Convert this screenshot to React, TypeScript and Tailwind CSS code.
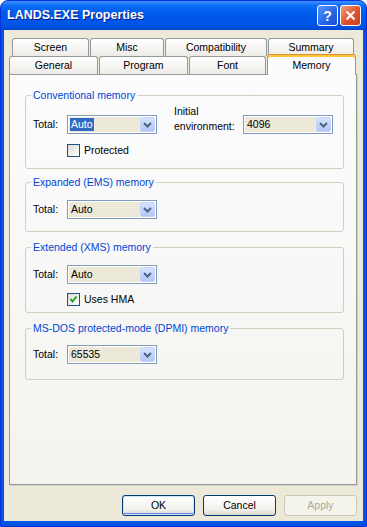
import React from 'react';

const topTabs = [
  { label: 'Screen', w: 'w-[77px]' },
  { label: 'Misc', w: 'w-[74px]' },
  { label: 'Compatibility', w: 'w-[102px]' },
  { label: 'Summary', w: 'w-[86px]' },
];

const bottomTabs = [
  { label: 'General', w: 'w-[89px]' },
  { label: 'Program', w: 'w-[89px]' },
  { label: 'Font', w: 'w-[77px]' },
];

function Chevron() {
  return (
    <svg width="9" height="6" viewBox="0 0 9 6">
      <path d="M1 1 L4.5 4.5 L8 1" fill="none" stroke="#4D6185" strokeWidth="2" />
    </svg>
  );
}

function Combo({ value, selected }: { value: string; selected?: boolean }) {
  return (
    <div className="flex h-[19px] w-[90px] shrink-0 border border-[#7F9DB9] bg-white p-px">
      <div className="flex flex-1 items-center bg-[#ECE9D8] pl-px">
        <span className={selected ? 'bg-[#316AC5] px-px leading-[13px] text-white' : 'px-px leading-[13px]'}>{value}</span>
      </div>
      <div className="flex w-[15px] items-center justify-center rounded-[2px] border border-[#C3D3FD] bg-[linear-gradient(180deg,#D7E3FD,#B2C7F5)]">
        <Chevron />
      </div>
    </div>
  );
}

function Check({ label, checked }: { label: string; checked?: boolean }) {
  return (
    <div className="flex h-[13px] items-center gap-[4px] pl-[34px]">
      <div className="flex h-[13px] w-[13px] items-center justify-center border border-[#1C5180] bg-[linear-gradient(135deg,#DCDCD7,#FFFFFF)]">
        {checked && (
          <svg width="9" height="9" viewBox="0 0 9 9">
            <path d="M1.5 4 L3.5 6.5 L7.5 1.5" fill="none" stroke="#21A121" strokeWidth="2" />
          </svg>
        )}
      </div>
      <span className="leading-[13px]">{label}</span>
    </div>
  );
}

function Group({ title, className, children }: { title: string; className: string; children: React.ReactNode }) {
  return (
    <fieldset className={`ml-[15px] w-[319px] rounded-[3px] border border-[#D0D0BF] px-[7px] ${className}`}>
      <legend className="-ml-[2px] px-[2px] leading-[13px] text-[#0046D5]">{title}</legend>
      {children}
    </fieldset>
  );
}

function TotalRow({ value, className }: { value: string; className: string }) {
  return (
    <div className={`flex items-center ${className}`}>
      <span className="w-[34px]">Total:</span>
      <Combo value={value} />
    </div>
  );
}

function Button({ label, primary, disabled }: { label: string; primary?: boolean; disabled?: boolean }) {
  if (disabled) {
    return (
      <button className="h-[21px] w-[73px] rounded-[3px] border border-[#C9C7BA] bg-[#F5F4EA] text-[#ACA899]">{label}</button>
    );
  }
  return (
    <button
      className={`h-[21px] w-[73px] rounded-[3px] border border-[#003C74] bg-[linear-gradient(180deg,#FFFFFF,#F2F1EC_70%,#DCD8CC)] ${
        primary ? 'shadow-[inset_0_0_0_1px_#CEE7FF,inset_0_-1px_0_1px_#6982EE]' : ''
      }`}
    >
      {label}
    </button>
  );
}

export default function App() {
  return (
    <div className="flex h-[527px] w-[367px] flex-col overflow-hidden rounded-t-[8px] border border-[#0831D9] bg-[#0054E3] font-['Liberation_Sans',Arial,sans-serif] text-[10.5px] text-black">
      {/* Title bar */}
      <div className="flex h-[29px] items-center pl-[6px] pr-[5px] bg-[linear-gradient(180deg,#3D8CF8_0%,#2A86FF_6%,#0F6FF8_14%,#0462F0_30%,#0058E8_55%,#0055E5_80%,#0050DD_92%,#0043C9_100%)]">
        <span className="flex-1 text-[12.5px] font-bold text-white [text-shadow:1px_1px_#0A1883]">LANDS.EXE Properties</span>
        <div className="flex gap-[2px]">
          <div className="flex h-[21px] w-[21px] items-center justify-center rounded-[3px] border border-white bg-[linear-gradient(135deg,#5A93F7,#2663E6_60%,#1B50D0)] text-[14px] font-bold leading-none text-white">
            ?
          </div>
          <div className="flex h-[21px] w-[21px] items-center justify-center rounded-[3px] border border-white bg-[linear-gradient(135deg,#F0A080,#E0512C_55%,#C8401E)]">
            <svg width="11" height="11" viewBox="0 0 11 11">
              <path d="M1.5 1.5 L9.5 9.5 M9.5 1.5 L1.5 9.5" stroke="white" strokeWidth="2.2" />
            </svg>
          </div>
        </div>
      </div>

      {/* Client */}
      <div className="mx-[3px] mb-[5px] flex flex-1 flex-col bg-[#ECE9D8] pt-[8px]">
        {/* Tabs */}
        <div className="flex h-[18px] gap-[1px] pl-[8px]">
          {topTabs.map((t) => (
            <div
              key={t.label}
              className={`${t.w} flex h-[18px] items-center justify-center rounded-t-[3px] border border-b-0 border-[#919B9C] bg-[linear-gradient(180deg,#FFFFFF,#ECEBE6)]`}
            >
              {t.label}
            </div>
          ))}
        </div>
        <div className="flex h-[18px] items-start gap-[1px] pl-[5px]">
          {bottomTabs.map((t) => (
            <div
              key={t.label}
              className={`${t.w} flex h-[18px] items-center justify-center rounded-t-[3px] border border-b-0 border-[#919B9C] bg-[linear-gradient(180deg,#FFFFFF,#ECEBE6)]`}
            >
              {t.label}
            </div>
          ))}
          <div className="relative z-10 -mt-[2px] flex h-[21px] w-[89px] justify-center rounded-t-[3px] border border-b-0 border-[#919B9C] border-t-[#E68B2C] bg-[#FCFCFE] pt-[3px] shadow-[inset_0_2px_0_#FFC73C]">
            Memory
          </div>
        </div>

        {/* Panel */}
        <div className="ml-[5px] flex h-[411px] w-[348px] flex-col border border-[#919B9C] bg-[linear-gradient(180deg,#FCFCFE,#F4F3EE)] pt-[14px] shadow-[1px_1px_0_#D6D3C4]">
          <Group title="Conventional memory" className="pb-[11px]">
            <div className="mt-[2px] flex items-start">
              <div className="mt-[11px] flex items-center">
                <span className="w-[34px]">Total:</span>
                <Combo value="Auto" selected />
              </div>
              <div className="ml-[17px] w-[69px] leading-[15px]">
                Initial
                <br />
                environment:
              </div>
              <div className="mt-[11px]">
                <Combo value="4096" />
              </div>
            </div>
            <div className="mt-[10px]">
              <Check label="Protected" />
            </div>
          </Group>

          <Group title="Expanded (EMS) memory" className="mt-[7px] pb-[12px]">
            <TotalRow value="Auto" className="mt-[11px]" />
          </Group>

          <Group title="Extended (XMS) memory" className="mt-[9px] pb-[6px]">
            <TotalRow value="Auto" className="mt-[11px]" />
            <div className="mt-[9px]">
              <Check label="Uses HMA" checked />
            </div>
          </Group>

          <Group title="MS-DOS protected-mode (DPMI) memory" className="mt-[9px] pb-[15px]">
            <TotalRow value="65535" className="mt-[10px]" />
          </Group>
        </div>

        {/* Buttons */}
        <div className="mt-[10px] flex justify-end gap-[8px] pr-[6px]">
          <Button label="OK" primary />
          <Button label="Cancel" />
          <Button label="Apply" disabled />
        </div>
      </div>
    </div>
  );
}
